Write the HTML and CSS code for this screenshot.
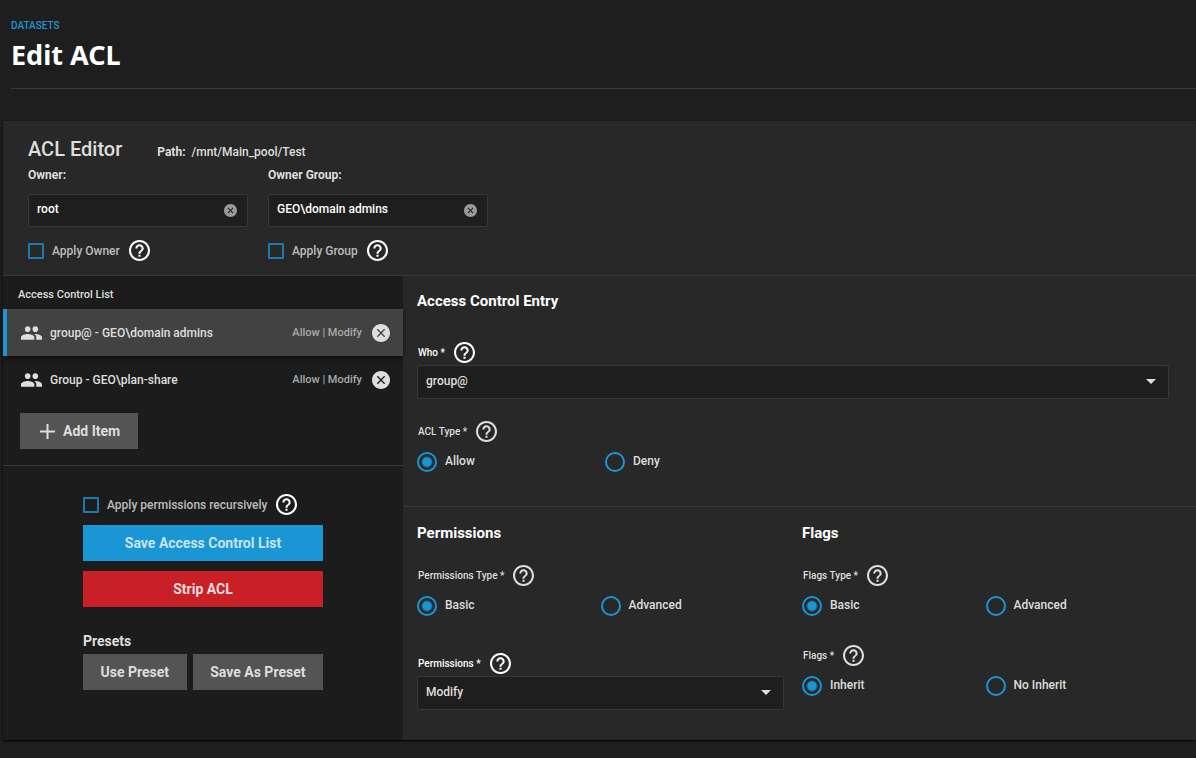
FILE: index.html
```html
<!DOCTYPE html>
<html lang="en">
  <head>
    <meta charset="UTF-8" />
    <meta name="viewport" content="width=device-width, initial-scale=1.0" />
    <title>Edit ACL</title>
    <link rel="stylesheet" href="styles.css">
  </head>

  <body>
    <!-- shared icons -->
    <svg class="sprite" aria-hidden="true">
      <symbol id="help" viewBox="2 2 20 20">
        <path d="M11 18h2v-2h-2v2zm1-16C6.48 2 2 6.48 2 12s4.48 10 10 10 10-4.48 10-10S17.52 2 12 2zm0 18c-4.41 0-8-3.59-8-8s3.59-8 8-8 8 3.59 8 8-3.59 8-8 8zm0-14c-2.21 0-4 1.79-4 4h2c0-1.1.9-2 2-2s2 .9 2 2c0 2-3 1.75-3 5h2c0-2.25 3-2.5 3-5 0-2.21-1.79-4-4-4z"/>
      </symbol>
      <symbol id="people" viewBox="1 5 22 14">
        <path d="M16 11c1.66 0 2.99-1.34 2.99-3S17.66 5 16 5c-1.66 0-3 1.34-3 3s1.34 3 3 3zm-8 0c1.66 0 2.99-1.34 2.99-3S9.66 5 8 5C6.34 5 5 6.34 5 8s1.34 3 3 3zm0 2c-2.33 0-7 1.17-7 3.5V19h14v-2.5c0-2.33-4.67-3.5-7-3.5zm8 0c-.29 0-.62.02-.97.05 1.16.84 1.97 1.97 1.97 3.45V19h6v-2.5c0-2.33-4.67-3.5-7-3.5z"/>
      </symbol>
      <symbol id="clear" viewBox="2 2 20 20">
        <path d="M12 2C6.47 2 2 6.47 2 12s4.47 10 10 10 10-4.47 10-10S17.53 2 12 2zm4.6 13.6l-1 1L12 13l-3.6 3.6-1-1L11 12 7.400 8.400l1-1L12 11l3.600-3.600 1 1L13 12z"/>
      </symbol>
    </svg>

    <header class="page-header">
      <a class="breadcrumb" href="#">DATASETS</a>
      <h1 class="page-title">Edit ACL</h1>
    </header>

    <main class="card">
      <section class="editor-head">
        <div class="editor-title">
          <h2>ACL Editor</h2>
          <p><strong>Path:</strong> /mnt/Main_pool/Test</p>
        </div>
        <div class="owners">
          <div class="owner">
            <label class="owner-label" for="owner">Owner:</label>
            <div class="text-box">
              <input type="text" id="owner" value="root">
              <button type="button" aria-label="Clear owner"><svg><use href="#clear"/></svg></button>
            </div>
            <div class="check-row">
              <input type="checkbox" id="applyOwner">
              <label for="applyOwner">Apply Owner</label>
              <svg class="help"><use href="#help"/></svg>
            </div>
          </div>
          <div class="owner">
            <label class="owner-label" for="ownerGroup">Owner Group:</label>
            <div class="text-box">
              <input type="text" id="ownerGroup" value="GEO\domain admins">
              <button type="button" aria-label="Clear owner group"><svg><use href="#clear"/></svg></button>
            </div>
            <div class="check-row">
              <input type="checkbox" id="applyGroup">
              <label for="applyGroup">Apply Group</label>
              <svg class="help"><use href="#help"/></svg>
            </div>
          </div>
        </div>
      </section>

      <div class="columns">
        <aside class="sidebar">
          <div class="acl-list">
            <h3 class="list-title">Access Control List</h3>
            <ul>
              <li class="acl-item selected">
                <svg class="people"><use href="#people"/></svg>
                <span class="who">group@ - GEO\domain admins</span>
                <span class="access">Allow | Modify</span>
                <button type="button" class="remove" aria-label="Remove"><svg><use href="#clear"/></svg></button>
              </li>
              <li class="acl-item">
                <svg class="people"><use href="#people"/></svg>
                <span class="who">Group - GEO\plan-share</span>
                <span class="access">Allow | Modify</span>
                <button type="button" class="remove" aria-label="Remove"><svg><use href="#clear"/></svg></button>
              </li>
            </ul>
            <button type="button" class="btn btn-add">
              <svg viewBox="0 0 15 15"><path d="M0 7.5h15M7.5 0v15"/></svg>
              Add Item
            </button>
          </div>

          <div class="actions">
            <div class="check-row">
              <input type="checkbox" id="recursive">
              <label for="recursive">Apply permissions recursively</label>
              <svg class="help"><use href="#help"/></svg>
            </div>
            <button type="button" class="btn btn-primary">Save Access Control List</button>
            <button type="button" class="btn btn-danger">Strip ACL</button>
            <h3 class="presets-title">Presets</h3>
            <div class="presets">
              <button type="button" class="btn">Use Preset</button>
              <button type="button" class="btn">Save As Preset</button>
            </div>
          </div>
        </aside>

        <form class="entry">
          <section class="entry-section">
            <h3>Access Control Entry</h3>
            <div class="field">
              <div class="field-label bright">
                <label for="who">Who *</label>
                <svg class="help"><use href="#help"/></svg>
              </div>
              <div class="select-box">
                <select id="who"><option>group@</option></select>
              </div>
            </div>
            <fieldset class="field field-near">
              <legend class="field-label">ACL Type *<svg class="help"><use href="#help"/></svg></legend>
              <div class="radios radios-wide">
                <label><input type="radio" name="aclType" checked><span>Allow</span></label>
                <label><input type="radio" name="aclType"><span>Deny</span></label>
              </div>
            </fieldset>
          </section>

          <section class="entry-section split">
            <div>
              <h3>Permissions</h3>
              <fieldset class="field">
                <legend class="field-label">Permissions Type *<svg class="help"><use href="#help"/></svg></legend>
                <div class="radios">
                  <label><input type="radio" name="permType" checked><span>Basic</span></label>
                  <label><input type="radio" name="permType"><span>Advanced</span></label>
                </div>
              </fieldset>
              <div class="field field-far">
                <div class="field-label bright">
                  <label for="permissions">Permissions *</label>
                  <svg class="help"><use href="#help"/></svg>
                </div>
                <div class="select-box">
                  <select id="permissions"><option>Modify</option></select>
                </div>
              </div>
            </div>
            <div>
              <h3>Flags</h3>
              <fieldset class="field">
                <legend class="field-label">Flags Type *<svg class="help"><use href="#help"/></svg></legend>
                <div class="radios">
                  <label><input type="radio" name="flagsType" checked><span>Basic</span></label>
                  <label><input type="radio" name="flagsType"><span>Advanced</span></label>
                </div>
              </fieldset>
              <fieldset class="field field-mid">
                <legend class="field-label">Flags *<svg class="help"><use href="#help"/></svg></legend>
                <div class="radios">
                  <label><input type="radio" name="flags" checked><span>Inherit</span></label>
                  <label><input type="radio" name="flags"><span>No Inherit</span></label>
                </div>
              </fieldset>
            </div>
          </section>
        </form>
      </div>
    </main>
  </body>
</html>
```

FILE: styles.css
```css
* {
  margin: 0;
  padding: 0;
  box-sizing: border-box;
}

body {
  font-family: Roboto, 'Liberation Sans', sans-serif;
  font-size: 12px;
  line-height: 16px;
  font-weight: 500;
  background: #1e1e1e;
  color: #dedede;
}

button, input, select {
  font: inherit;
  color: inherit;
}

button {
  border: none;
  cursor: pointer;
}

svg {
  display: block;
  fill: currentColor;
  flex: none;
}

ul {
  list-style: none;
}

fieldset {
  border: none;
  min-width: 0;
}

.sprite {
  display: none;
}

.page-header {
  margin-left: 11px;
  padding: 18px 0 12px;
  border-bottom: 1px solid #383838;
}

.breadcrumb {
  display: block;
  font-size: 10px;
  color: #1a96d4;
  text-decoration: none;
}

.page-title {
  font-family: 'Noto Sans', sans-serif;
  font-size: 27px;
  line-height: 42px;
  font-weight: 700;
  color: #fff;
}

.card {
  margin: 32px 0 17px 3px;
  background: #282828;
  box-shadow: 0 1px 2px #000;
}

.editor-head {
  padding: 16px 25px 14px;
  border-bottom: 1px solid #383838;
}

.editor-title {
  display: flex;
  align-items: baseline;
  gap: 35px;
}

.editor-title h2 {
  font-size: 20px;
  line-height: 24px;
  font-weight: 500;
}

.editor-title strong {
  margin-right: 3px;
  font-weight: 700;
}

.owners {
  display: flex;
  gap: 20px;
  margin-top: 6px;
}

.owner {
  width: 220px;
}

.owner-label {
  display: block;
  margin-bottom: 11px;
  font-weight: 700;
}

.text-box {
  display: flex;
  align-items: center;
  height: 33px;
  margin-bottom: 13px;
  padding: 0 10px 0 8px;
  background: #1e1e1e;
  border: 1px solid #383838;
  border-radius: 2px;
  color: #fff;
}

.text-box input {
  flex: 1;
  min-width: 0;
  padding-bottom: 3px;
  background: none;
  border: none;
  outline: none;
}

.text-box button {
  background: none;
  color: #999;
}

.text-box svg {
  width: 13px;
  height: 13px;
}

.check-row {
  display: flex;
  align-items: center;
  height: 21px;
  color: #bcbcbc;
}

.check-row input {
  appearance: none;
  width: 16px;
  height: 16px;
  margin-right: 8px;
  border: 2px solid #1a7cae;
  border-radius: 1px;
}

.check-row input:checked {
  background: #1a96d4;
}

.help {
  width: 21px;
  height: 21px;
  margin-left: 9px;
}

.check-row .help {
  color: #fff;
}

.columns {
  display: flex;
}

.sidebar {
  flex: none;
  width: 400px;
  background: #1c1c1c;
}

.acl-list {
  padding-bottom: 16px;
  border-bottom: 1px solid #383838;
}

.list-title {
  padding: 11px 15px 6px;
  font-size: 11px;
  font-weight: 500;
}

.acl-item {
  display: flex;
  align-items: center;
  height: 47px;
  padding: 0 13px 0 14px;
  border-left: 4px solid transparent;
}

.acl-item.selected {
  background: #424242;
  border-left-color: #1a96d4;
  box-shadow: 0 2px 5px rgba(0, 0, 0, 0.5);
}

.people {
  width: 21px;
  height: 14px;
  margin-right: 8px;
}

.who {
  flex: 1;
}

.access {
  margin-right: 10px;
  font-size: 11px;
  color: #aaa;
}

.remove {
  background: none;
  color: #dedede;
}

.remove svg {
  width: 18px;
  height: 18px;
}

.btn {
  height: 36px;
  background: #545454;
  font-size: 14px;
  font-weight: 700;
  white-space: nowrap;
}

.btn-add {
  display: flex;
  align-items: center;
  gap: 8px;
  margin: 10px 0 0 17px;
  padding: 0 18px 0 20px;
}

.btn-add svg {
  width: 15px;
  height: 15px;
  stroke: currentColor;
  stroke-width: 2;
}

.btn-primary {
  background: #1a96d4;
  color: #c8e4f4;
}

.btn-danger {
  background: #c92028;
  color: #f4dede;
}

.actions {
  display: flex;
  flex-direction: column;
  gap: 10px;
  width: 240px;
  margin: 0 auto;
  padding: 28px 0 50px;
}

.presets-title {
  margin: 16px 0 -5px;
  font-size: 14px;
  font-weight: 700;
}

.presets {
  display: flex;
  gap: 6px;
}

.presets .btn {
  flex: auto;
}

.entry {
  flex: 1;
  min-width: 0;
}

.entry-section {
  padding: 15px 27px 34px 14px;
}

.entry-section + .entry-section {
  border-top: 1px solid #383838;
  padding-top: 16px;
  padding-bottom: 30px;
}

.entry-section h3 {
  margin-bottom: 31px;
  font-size: 15px;
  line-height: 20px;
  font-weight: 700;
  color: #fff;
}

.split {
  display: grid;
  grid-template-columns: 1fr 1fr;
  gap: 18px;
}

.entry-section.split h3 {
  margin-bottom: 22px;
}

.field-near {
  margin-top: 22px;
}

.field-mid {
  margin-top: 29px;
}

.field-far {
  margin-top: 37px;
}

.field-label {
  display: flex;
  align-items: center;
  height: 21px;
  padding-left: 1px;
  font-size: 10px;
}

.field-label.bright {
  color: #fff;
}

.select-box {
  position: relative;
  margin-top: 2px;
}

.select-box select {
  display: block;
  appearance: none;
  width: 100%;
  height: 34px;
  padding: 0 32px 2px 8px;
  background: #1e1e1e;
  border: 1px solid #383838;
  border-radius: 2px;
}

.select-box::after {
  content: '';
  position: absolute;
  right: 13px;
  top: 14px;
  border: 5px solid transparent;
  border-top-color: #dedede;
  border-bottom: none;
  pointer-events: none;
}

.radios {
  display: grid;
  grid-template-columns: repeat(2, 1fr);
  margin-top: 10px;
}

.radios-wide {
  grid-template-columns: repeat(4, 1fr);
}

.radios label {
  display: flex;
  gap: 8px;
  line-height: 18px;
}

.radios input {
  appearance: none;
  width: 20px;
  height: 20px;
  border: 2px solid #1a96d4;
  border-radius: 50%;
}

.radios input:checked {
  background: radial-gradient(circle, #1a96d4 4px, transparent 6px);
}

/* Narrow screens */
@media (max-width: 800px) {
  .columns {
    flex-direction: column;
  }

  .sidebar {
    width: 100%;
  }

  .split {
    grid-template-columns: 1fr;
  }
}
```
